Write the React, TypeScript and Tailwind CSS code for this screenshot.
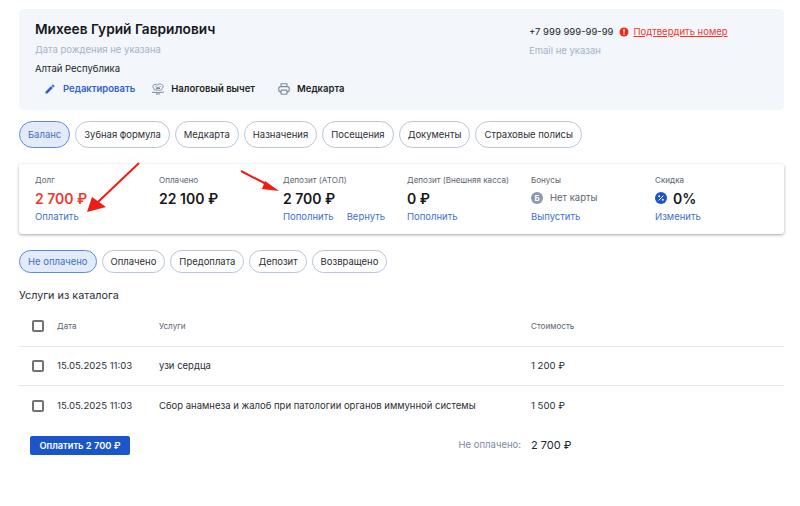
import React from "react";

const font = { fontFamily: "Inter, 'Liberation Sans', sans-serif" };

function Pill({ label, active }: { label: string; active?: boolean }) {
  return (
    <div
      className={
        active
          ? "flex items-center h-full px-2 rounded-full border border-[#5b8ae0] bg-[#e3ebf9] text-[#3f6fc4] text-[9.48px] leading-none"
          : "flex items-center h-full px-2 rounded-full border border-[#b8c4d8] bg-white text-[#2b2f36] text-[9.48px] leading-none"
      }
    >
      {label}
    </div>
  );
}

function Stat({ label, children, links }: { label: string; children: React.ReactNode; links: string[] }) {
  return (
    <div className="flex flex-col">
      <div className="text-[8.1px] leading-[12px] text-[#5b6470] h-[12px]">{label}</div>
      <div className="flex items-center h-[22px] mt-[1px]">{children}</div>
      <div className="flex gap-[13px] mt-[1px] text-[9.5px] leading-[14px] text-[#3f6fd0]">
        {links.map((l) => (
          <span key={l}>{l}</span>
        ))}
      </div>
    </div>
  );
}

function Box() {
  return <div className="w-[12px] h-[12px] rounded-[2px] border-2 border-[#737373]" />;
}

function Row({ service, cost, border }: { service: string; cost: string; border?: boolean }) {
  return (
    <div className={"grid grid-cols-[25px_102px_372px_1fr] items-center h-[39px] pl-[13px] text-[9.6px] text-[#2b2f36] " + (border ? "border-b border-[#e8e8e8]" : "")}>
      <Box />
      <span className="pt-[1px]">15.05.2025 11:03</span>
      <span className="pt-[1px] text-[9.5px]">{service}</span>
      <span className="pt-[1px]">{cost}</span>
    </div>
  );
}

export default function App() {
  return (
    <div className="relative w-[800px] h-[506px] bg-white overflow-hidden pl-[19px] pr-[16px] pt-[9px]" style={font}>
      {/* header */}
      <div className="grid grid-cols-[494px_1fr] h-[101px] bg-[#f3f6fb] rounded-[5px] pl-[16px] pt-[10px]">
        <div className="flex flex-col">
          <div className="text-[13.7px] leading-[20px] font-semibold text-[#16181c]">Михеев Гурий Гаврилович</div>
          <div className="mt-[4px] text-[9.5px] leading-[14px] text-[#a6b3c6]">Дата рождения не указана</div>
          <div className="mt-[5px] text-[9.5px] leading-[14px] text-[#22252a]">Алтай Республика</div>
          <div className="flex items-center mt-[5px] pl-[9px] h-[16px] text-[9.5px] font-semibold">
            <svg width="12" height="12" viewBox="0 0 24 24" fill="#2f62cf">
              <path d="M3 17.25V21h3.75L17.81 9.94l-3.75-3.75L3 17.25zM20.71 7.04a1 1 0 0 0 0-1.41l-2.34-2.34a1 1 0 0 0-1.41 0l-1.83 1.83 3.75 3.75 1.83-1.83z" />
            </svg>
            <span className="ml-[7px] text-[#2f62cf]">Редактировать</span>
            <svg className="ml-[16px]" width="14" height="12" viewBox="0 0 28 24" fill="none" stroke="#7d8a9c" strokeWidth="2">
              <path d="M4 7c0-3 3-5 6-4 2 1 3 1 4 0 2-2 5-1 7 0 3 1 4 3 3 5-1 3-3 3-3 6-3 1-6 1-8 0l-6 0c-1-3-3-4-3-7z" />
              <path d="M9 7c2 1 3 2 5 2s3-1 5-2M10 11h8" />
              <path d="M2 19c3-2 5 1 8 0s5 1 8 0 5 0 8-1M10 22h8" />
            </svg>
            <span className="ml-[6px] text-[#1c1f24]">Налоговый вычет</span>
            <svg className="ml-[22px]" width="14" height="14" viewBox="0 0 24 24" fill="none" stroke="#7d8a9c" strokeWidth="2">
              <path d="M7 8V3h10v5" />
              <rect x="3" y="8" width="18" height="9" rx="3" />
              <rect x="7" y="14" width="10" height="7" rx="1" fill="#f3f6fb" />
            </svg>
            <span className="ml-[6px] text-[#1c1f24]">Медкарта</span>
          </div>
        </div>
        <div className="flex flex-col pt-[6px]">
          <div className="flex items-center h-[14px] text-[9.5px]">
            <span className="text-[#22252a]">+7 999 999-99-99</span>
            <svg className="ml-[6px]" width="10" height="10" viewBox="0 0 10 10">
              <circle cx="5" cy="5" r="4.5" fill="#ee2a1e" />
              <rect x="4.4" y="2" width="1.2" height="3.8" fill="#fff" />
              <rect x="4.4" y="6.5" width="1.2" height="1.2" fill="#fff" />
            </svg>
            <span className="ml-[4px] text-[#f2382c] underline">Подтвердить номер</span>
          </div>
          <div className="mt-[5px] text-[9.5px] leading-[14px] text-[#a6b3c6]">Email не указан</div>
        </div>
      </div>

      {/* tabs */}
      <div className="flex gap-[5px] h-[27px] mt-[11px]">
        <Pill label="Баланс" active />
        <Pill label="Зубная формула" />
        <Pill label="Медкарта" />
        <Pill label="Назначения" />
        <Pill label="Посещения" />
        <Pill label="Документы" />
        <Pill label="Страховые полисы" />
      </div>

      {/* stats */}
      <div className="grid grid-cols-[124px_124px_124px_124px_124px_1fr] h-[70px] mt-[16px] pl-[16px] pt-[10px] rounded-[3px] bg-white shadow-[0_1px_3px_rgba(0,0,0,0.35)]">
        <Stat label="Долг" links={["Оплатить"]}>
          <span className="text-[14px] font-semibold text-[#f2382c]">2 700 ₽</span>
        </Stat>
        <Stat label="Оплачено" links={[]}>
          <span className="text-[14px] font-semibold text-[#16181c]">22 100 ₽</span>
        </Stat>
        <Stat label="Депозит (АТОЛ)" links={["Пополнить", "Вернуть"]}>
          <span className="text-[14px] font-semibold text-[#16181c]">2 700 ₽</span>
        </Stat>
        <Stat label="Депозит (Внешняя касса)" links={["Пополнить"]}>
          <span className="text-[14px] font-semibold text-[#16181c]">0 ₽</span>
        </Stat>
        <Stat label="Бонусы" links={["Выпустить"]}>
          <span className="flex items-center justify-center w-[12px] h-[12px] rounded-full bg-[#8a9ab3] text-white text-[8px] font-bold">Б</span>
          <span className="ml-[7px] text-[9.5px] text-[#5b6470]">Нет карты</span>
        </Stat>
        <Stat label="Скидка" links={["Изменить"]}>
          <svg width="12" height="12" viewBox="0 0 12 12">
            <circle cx="6" cy="6" r="6" fill="#1a56c9" />
            <path d="M3.6 8.4 8.4 3.6" stroke="#fff" strokeWidth="1" />
            <circle cx="4.2" cy="4.2" r="1" fill="#fff" />
            <circle cx="7.8" cy="7.8" r="1" fill="#fff" />
          </svg>
          <span className="ml-[6px] text-[14px] font-semibold text-[#16181c]">0%</span>
        </Stat>
      </div>

      {/* filters */}
      <div className="flex gap-[5px] h-[23px] mt-[16px]">
        <Pill label="Не оплачено" active />
        <Pill label="Оплачено" />
        <Pill label="Предоплата" />
        <Pill label="Депозит" />
        <Pill label="Возвращено" />
      </div>

      <div className="mt-[15px] text-[10.8px] leading-[16px] text-[#2b2f36]">Услуги из каталога</div>

      {/* table */}
      <div className="grid grid-cols-[25px_102px_372px_1fr] items-center h-[41px] mt-[2px] pl-[13px] text-[8.1px] text-[#5b6470] border-b border-[#e8e8e8]">
        <Box />
        <span>Дата</span>
        <span>Услуги</span>
        <span>Стоимость</span>
      </div>
      <Row service="узи сердца" cost="1 200 ₽" border />
      <Row service="Сбор анамнеза и жалоб при патологии органов иммунной системы" cost="1 500 ₽" />

      <div className="flex items-center h-[19px] mt-[11px] pl-[11px]">
        <div className="flex items-center justify-center w-[100px] h-full rounded-[2px] bg-[#1a56c9] text-white text-[9.3px] font-semibold">Оплатить 2 700 ₽</div>
        <span className="ml-[327px] w-[64px] whitespace-nowrap text-right text-[9.5px] text-[#7d8a9c]">Не оплачено:</span>
        <span className="ml-[10px] text-[11px] text-[#22252a]">2 700 ₽</span>
      </div>

      {/* annotation arrows */}
      <svg className="absolute left-0 top-0 pointer-events-none" width="800" height="506">
        <line x1="139" y1="163" x2="98" y2="202" stroke="#ee1c14" strokeWidth="2" />
        <polygon points="87,212 92,197 106,207" fill="#ee1c14" />
        <line x1="241" y1="171" x2="268" y2="185" stroke="#ee1c14" strokeWidth="2" />
        <polygon points="279,191 262,189 265,181" fill="#ee1c14" />
      </svg>
    </div>
  );
}
